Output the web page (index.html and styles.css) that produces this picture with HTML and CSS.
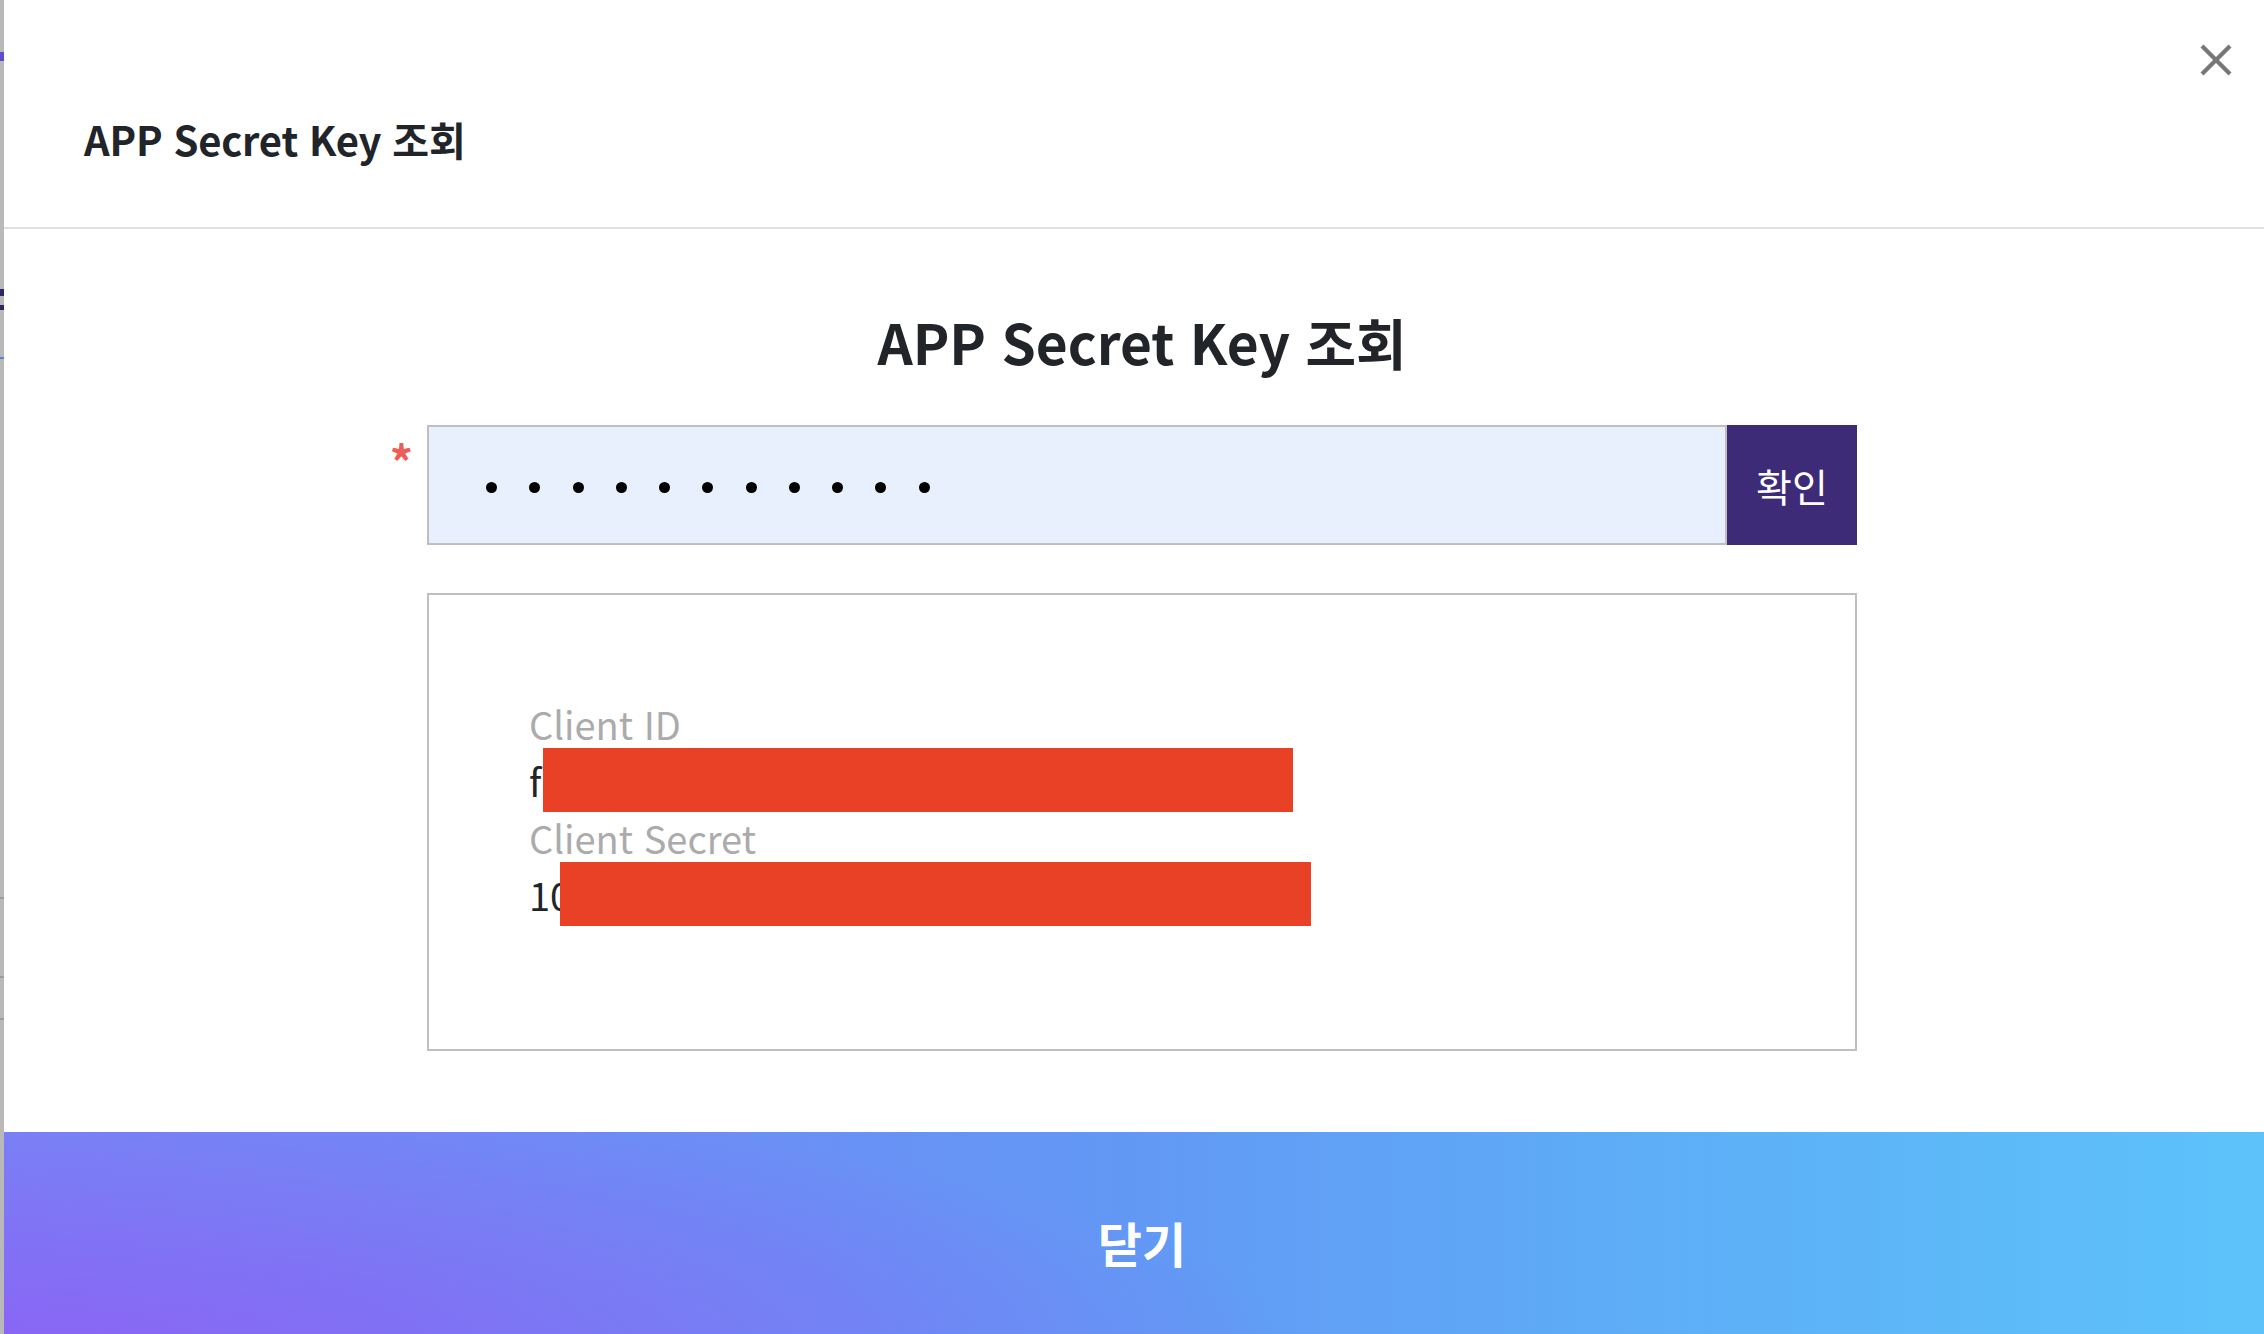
FILE: index.html
```html
<!DOCTYPE html>
<html lang="ko">
<head>
<meta charset="utf-8">
<title>APP Secret Key 조회</title>
<link rel="stylesheet" href="styles.css">
</head>
<body>
<div class="page">
  <div class="backdrop"></div>
  <div class="modal">
    <header class="modal-header">
      <h2 class="modal-title">APP Secret Key 조회</h2>
      <button class="close-btn" type="button" aria-label="닫기">
        <svg width="32" height="32" viewBox="0 0 32 32"><path d="M2 2 L30 30 M30 2 L2 30" stroke="#777" stroke-width="4.2" fill="none"/></svg>
      </button>
    </header>
    <main class="modal-body">
      <h1 class="body-title">APP Secret Key 조회</h1>
      <div class="content">
        <div class="pw-row">
          <span class="required">*</span>
          <div class="pw-input" role="textbox" aria-label="비밀번호">
            <span class="dot"></span><span class="dot"></span><span class="dot"></span><span class="dot"></span><span class="dot"></span><span class="dot"></span><span class="dot"></span><span class="dot"></span><span class="dot"></span><span class="dot"></span><span class="dot"></span>
          </div>
          <button class="confirm-btn" type="button">확인</button>
        </div>
        <div class="result-box">
          <div class="label">Client ID</div>
          <div class="value">f<span class="redact redact-id"></span></div>
          <div class="label">Client Secret</div>
          <div class="value">10<span class="redact redact-secret"></span></div>
        </div>
      </div>
    </main>
    <footer class="modal-footer">
      <button class="close-footer" type="button">닫기</button>
    </footer>
  </div>
</div>
</body>
</html>
```
FILE: styles.css
```css
html, body {
  margin: 0;
  padding: 0;
  height: 100%;
  overflow: hidden;
  background: #ffffff;
}

body {
  font-family: "Noto Sans CJK KR", "Noto Sans", sans-serif;
  color: #212529;
}

.page {
  display: flex;
  width: 2280px;
  min-height: 1354px;
}

.backdrop {
  flex: none;
  width: 4px;
  background:
    linear-gradient(to bottom, transparent 52px, #5a4fc8 52px, #5a4fc8 61px, transparent 61px),
    linear-gradient(to bottom, transparent 289px, #2d2762 289px, #2d2762 296px, transparent 296px, transparent 305px, #2d2762 305px, #2d2762 310px, transparent 310px),
    linear-gradient(to bottom, transparent 357px, #4a86d8 357px, #4a86d8 359px, transparent 359px),
    linear-gradient(to bottom, transparent 897px, #9c9c9c 897px, #9c9c9c 899px, transparent 899px, transparent 976px, #9c9c9c 976px, #9c9c9c 978px, transparent 978px, transparent 1018px, #9c9c9c 1018px, #9c9c9c 1020px, transparent 1020px),
    #b9b9b9;
}

.modal {
  flex: none;
  width: 2276px;
  display: flex;
  flex-direction: column;
  background: #ffffff;
}

.modal-header {
  display: flex;
  justify-content: space-between;
  align-items: flex-start;
  height: 227px;
  border-bottom: 2px solid #dee2e6;
  box-sizing: content-box;
  padding: 0 48px 0 80px;
}

.modal-title {
  margin: 115px 0 0 0;
  font-size: 40px;
  line-height: 48px;
  font-weight: 700;
  letter-spacing: -0.2px;
  color: #212529;
}

.close-btn {
  margin-top: 44px;
  padding: 0;
  border: 0;
  background: transparent;
  width: 32px;
  height: 32px;
  display: block;
}

.close-btn svg {
  display: block;
}

.modal-body {
  padding: 79px 0 81px;
  display: flex;
  flex-direction: column;
  align-items: center;
}

.body-title {
  margin: 0;
  font-size: 55px;
  line-height: 67px;
  font-weight: 700;
  color: #212529;
}

.content {
  width: 1430px;
  margin-top: 50px;
  display: flex;
  flex-direction: column;
  gap: 48px;
}

.pw-row {
  position: relative;
  display: flex;
  height: 120px;
}

.required {
  position: absolute;
  right: calc(100% + 14px);
  top: 12px;
  font-size: 46px;
  line-height: 46px;
  font-weight: 700;
  color: #ec5f58;
}

.pw-input {
  width: 1300px;
  box-sizing: border-box;
  border: 2px solid #bfbfbf;
  background: #e8f0fd;
  display: flex;
  align-items: center;
  gap: 32.25px;
  padding: 4px 0 0 57px;
}

.dot {
  width: 11px;
  height: 11px;
  border-radius: 50%;
  background: #000000;
  flex: none;
}

.confirm-btn {
  width: 130px;
  height: 120px;
  border: 0;
  padding: 0;
  background: #3d2b78;
  color: #ffffff;
  font-family: inherit;
  font-size: 39px;
  font-weight: 400;
}

.result-box {
  height: 458px;
  box-sizing: border-box;
  border: 2px solid #bfbfbf;
  padding: 100px 100px 0 100px;
}

.label,
.value {
  font-size: 38px;
  line-height: 57px;
}

.label {
  color: #ababab;
}

.value {
  position: relative;
  color: #212529;
}

.redact {
  position: absolute;
  top: -4px;
  height: 64px;
  background: #e94126;
}

.redact-id {
  left: 14px;
  width: 750px;
}

.redact-secret {
  left: 31px;
  width: 751px;
}

.modal-footer {
  height: 220px;
  background:
    radial-gradient(ellipse 1300px 260px at 0 100%, rgba(146, 86, 243, 0.7), rgba(146, 86, 243, 0) 100%),
    linear-gradient(90deg, #7784f6 0%, #6a90f5 35%, #6299f5 50%, #5db0f7 75%, #5dc3fa 100%);
  display: flex;
}

.close-footer {
  flex: 1;
  border: 0;
  background: transparent;
  color: #ffffff;
  font-family: inherit;
  font-size: 48px;
  font-weight: 700;
  padding: 0;
}
```
